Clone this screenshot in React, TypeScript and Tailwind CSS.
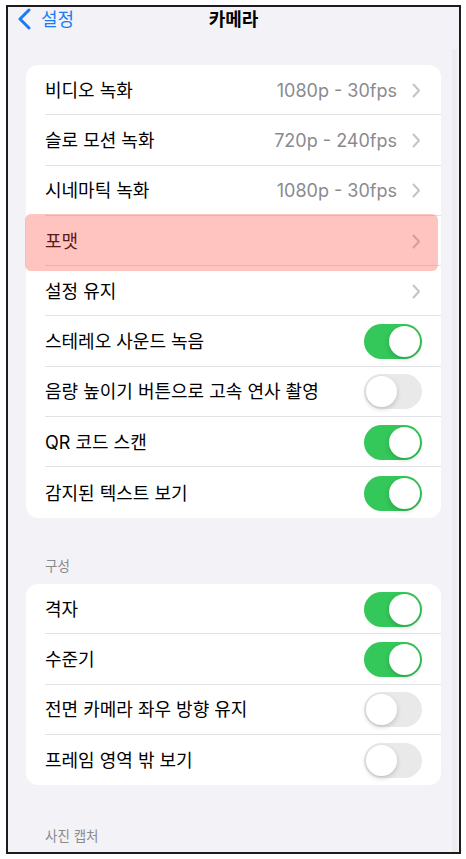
import React from 'react';

type Row = {
  label: string;
  value?: string;
  chevron?: boolean;
  toggle?: boolean;
  on?: boolean;
  highlight?: boolean;
};

const mainRows: Row[] = [
  { label: '비디오 녹화', value: '1080p - 30fps', chevron: true },
  { label: '슬로 모션 녹화', value: '720p - 240fps', chevron: true },
  { label: '시네마틱 녹화', value: '1080p - 30fps', chevron: true },
  { label: '포맷', chevron: true, highlight: true },
  { label: '설정 유지', chevron: true },
  { label: '스테레오 사운드 녹음', toggle: true, on: true },
  { label: '음량 높이기 버튼으로 고속 연사 촬영', toggle: true, on: false },
  { label: 'QR 코드 스캔', toggle: true, on: true },
  { label: '감지된 텍스트 보기', toggle: true, on: true },
];

const compRows: Row[] = [
  { label: '격자', toggle: true, on: true },
  { label: '수준기', toggle: true, on: true },
  { label: '전면 카메라 좌우 방향 유지', toggle: true, on: false },
  { label: '프레임 영역 밖 보기', toggle: true, on: false },
];

const Chevron = () => (
  <svg width="9" height="15" viewBox="0 0 9 15" fill="none">
    <path d="M1.5 1.5L7 7.5L1.5 13.5" stroke="#c4c4c7" strokeWidth="2" strokeLinecap="round" strokeLinejoin="round" />
  </svg>
);

const Toggle = ({ on }: { on?: boolean }) => (
  <div
    className={`relative w-[58px] h-[35px] rounded-full ${on ? 'bg-[#34c759]' : 'bg-[#e9e9ea]'}`}
  >
    <div
      className={`absolute top-[2px] w-[31px] h-[31px] rounded-full bg-white shadow-[0_2px_5px_rgba(0,0,0,0.18)] ${
        on ? 'right-[2px]' : 'left-[2px]'
      }`}
    />
  </div>
);

const Card = ({ rows }: { rows: Row[] }) => (
  <div className="mx-[18px] bg-white rounded-[12px]">
    {rows.map((r, i) => (
      <div key={r.label} className="relative h-[50.3px] flex items-center pl-[19px]">
        <div
          className={`flex-1 h-full flex items-center pr-[19px] pt-[1px] ${
            i < rows.length - 1 ? 'border-b border-[#e2e2e6]' : ''
          }`}
        >
          <span className="flex-1 text-[18px] text-black">{r.label}</span>
          {r.value && <span className="text-[18px] text-[#8a8a8e] mr-[15px]">{r.value}</span>}
          {r.chevron && (
            <span className="mr-[1px]">
              <Chevron />
            </span>
          )}
          {r.toggle && <Toggle on={r.on} />}
        </div>
        {r.highlight && (
          <div className="absolute left-[-1px] right-[3px] top-[-2px] bottom-[-5px] rounded-[6px] bg-[rgba(255,80,70,0.34)]" />
        )}
      </div>
    ))}
  </div>
);

export default function App() {
  return (
    <div
      className="w-[466px] h-[859px] bg-white pt-[5px] pl-[6px]"
      style={{ fontFamily: 'Inter, "Noto Sans CJK KR", sans-serif' }}
    >
      <div className="relative w-[455px] h-[849px] border-2 border-[#1c1c1c] bg-[#f2f2f7] overflow-hidden">
        {/* scroll strip */}
        <div className="absolute right-[2px] top-[42px] bottom-0 w-[5px] bg-[#ebebf0]" />

        {/* nav bar */}
        <div className="relative h-[24px] flex items-center">
          <div className="flex items-center pl-[10px] gap-[10px]">
            <svg width="13" height="22" viewBox="0 0 13 22" fill="none">
              <path d="M11 2L2 11L11 20" stroke="#1a7cf5" strokeWidth="3" strokeLinecap="round" strokeLinejoin="round" />
            </svg>
            <span className="text-[18px] text-[#1a7cf5]">설정</span>
          </div>
          <span className="absolute left-0 right-0 text-center text-[18px] font-bold text-black pointer-events-none">
            카메라
          </span>
        </div>

        <div className="h-[34px]" />
        <Card rows={mainRows} />

        <div className="pl-[37px] pt-[38px] pb-[8px] text-[13.5px] text-[#8a8a8e]">구성</div>
        <Card rows={compRows} />

        <div className="pl-[37px] pt-[41px] text-[13.5px] text-[#8a8a8e]">사진 캡처</div>
      </div>
    </div>
  );
}
